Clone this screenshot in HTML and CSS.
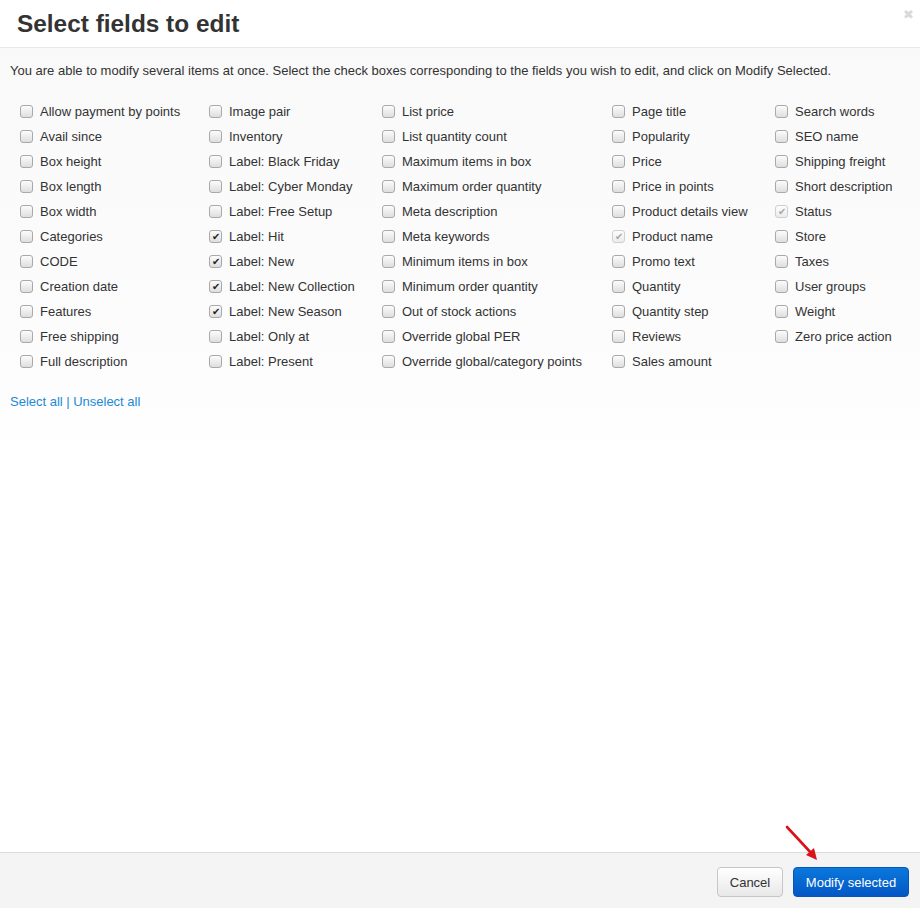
FILE: index.html
```html
<!DOCTYPE html>
<html>
<head>
<meta charset="utf-8">
<link rel="stylesheet" href="styles.css">
</head>
<body>
<div class="dialog">
  <div class="header">
    <h1 class="title">Select fields to edit</h1>
    <span class="close">&#x2716;</span>
  </div>
  <div class="content">
    <p class="intro">You are able to modify several items at once. Select the check boxes corresponding to the fields you wish to edit, and click on Modify Selected.</p>
    <div class="fields">
      <div class="col c1">
        <label class="field"><span class="cb"></span>Allow payment by points</label>
        <label class="field"><span class="cb"></span>Avail since</label>
        <label class="field"><span class="cb"></span>Box height</label>
        <label class="field"><span class="cb"></span>Box length</label>
        <label class="field"><span class="cb"></span>Box width</label>
        <label class="field"><span class="cb"></span>Categories</label>
        <label class="field"><span class="cb"></span>CODE</label>
        <label class="field"><span class="cb"></span>Creation date</label>
        <label class="field"><span class="cb"></span>Features</label>
        <label class="field"><span class="cb"></span>Free shipping</label>
        <label class="field"><span class="cb"></span>Full description</label>
      </div>
      <div class="col c2">
        <label class="field"><span class="cb"></span>Image pair</label>
        <label class="field"><span class="cb"></span>Inventory</label>
        <label class="field"><span class="cb"></span>Label: Black Friday</label>
        <label class="field"><span class="cb"></span>Label: Cyber Monday</label>
        <label class="field"><span class="cb"></span>Label: Free Setup</label>
        <label class="field"><span class="cb checked">&#x2714;</span>Label: Hit</label>
        <label class="field"><span class="cb checked">&#x2714;</span>Label: New</label>
        <label class="field"><span class="cb checked">&#x2714;</span>Label: New Collection</label>
        <label class="field"><span class="cb checked">&#x2714;</span>Label: New Season</label>
        <label class="field"><span class="cb"></span>Label: Only at</label>
        <label class="field"><span class="cb"></span>Label: Present</label>
      </div>
      <div class="col c3">
        <label class="field"><span class="cb"></span>List price</label>
        <label class="field"><span class="cb"></span>List quantity count</label>
        <label class="field"><span class="cb"></span>Maximum items in box</label>
        <label class="field"><span class="cb"></span>Maximum order quantity</label>
        <label class="field"><span class="cb"></span>Meta description</label>
        <label class="field"><span class="cb"></span>Meta keywords</label>
        <label class="field"><span class="cb"></span>Minimum items in box</label>
        <label class="field"><span class="cb"></span>Minimum order quantity</label>
        <label class="field"><span class="cb"></span>Out of stock actions</label>
        <label class="field"><span class="cb"></span>Override global PER</label>
        <label class="field"><span class="cb"></span>Override global/category points</label>
      </div>
      <div class="col c4">
        <label class="field"><span class="cb"></span>Page title</label>
        <label class="field"><span class="cb"></span>Popularity</label>
        <label class="field"><span class="cb"></span>Price</label>
        <label class="field"><span class="cb"></span>Price in points</label>
        <label class="field"><span class="cb"></span>Product details view</label>
        <label class="field"><span class="cb disabled">&#x2714;</span>Product name</label>
        <label class="field"><span class="cb"></span>Promo text</label>
        <label class="field"><span class="cb"></span>Quantity</label>
        <label class="field"><span class="cb"></span>Quantity step</label>
        <label class="field"><span class="cb"></span>Reviews</label>
        <label class="field"><span class="cb"></span>Sales amount</label>
      </div>
      <div class="col c5">
        <label class="field"><span class="cb"></span>Search words</label>
        <label class="field"><span class="cb"></span>SEO name</label>
        <label class="field"><span class="cb"></span>Shipping freight</label>
        <label class="field"><span class="cb"></span>Short description</label>
        <label class="field"><span class="cb disabled">&#x2714;</span>Status</label>
        <label class="field"><span class="cb"></span>Store</label>
        <label class="field"><span class="cb"></span>Taxes</label>
        <label class="field"><span class="cb"></span>User groups</label>
        <label class="field"><span class="cb"></span>Weight</label>
        <label class="field"><span class="cb"></span>Zero price action</label>
      </div>
    </div>
    <div class="links"><a class="link">Select all</a><span class="sep">|</span><a class="link">Unselect all</a></div>
  </div>
  <div class="footer">
    <button class="btn btn-cancel">Cancel</button>
    <button class="btn btn-primary">Modify selected</button>
    <svg class="arrow" width="40" height="40" viewBox="0 0 40 40">
      <line x1="3" y1="3" x2="29" y2="31" stroke="#d9131a" stroke-width="2.6" stroke-linecap="round"/>
      <path d="M33 36 L22 31 L30 24 Z" fill="#d9131a"/>
    </svg>
  </div>
</div>
</body>
</html>
```
FILE: styles.css
```css
html, body {
  margin: 0;
  padding: 0;
  background: #fff;
}
body {
  font-family: "Liberation Sans", Arial, sans-serif;
  color: #333;
  font-size: 13px;
}
.dialog {
  width: 920px;
  height: 908px;
  display: flex;
  flex-direction: column;
  position: relative;
}
.header {
  height: 48px;
  border-bottom: 1px solid #e8e8e8;
  box-sizing: border-box;
  display: flex;
  align-items: center;
  padding-left: 17px;
  background: #fff;
}
.title {
  margin: 0;
  font-size: 24.4px;
  font-weight: bold;
  color: #333;
}
.close {
  position: absolute;
  top: 7px;
  right: 6px;
  font-size: 13px;
  color: #d9d9d9;
}
.content {
  flex: 1;
  padding: 0 10px;
  background: linear-gradient(#f9f9f9 0px, #fcfcfc 300px, #fff 420px);
}
.intro {
  margin: 15px 0 0;
  line-height: 16px;
  color: #333;
}
.fields {
  display: grid;
  grid-template-columns: 189px 173px 230px 163px auto;
  margin-top: 20px;
  padding-left: 10px;
}
.col {
  display: flex;
  flex-direction: column;
}
.field {
  display: flex;
  align-items: center;
  height: 25px;
  white-space: nowrap;
}
.cb {
  width: 11px;
  height: 11px;
  border: 1px solid #a9a9a9;
  border-radius: 3px;
  background: linear-gradient(#fcfcfc, #dedede);
  margin-right: 7px;
  box-sizing: content-box;
  font-size: 10px;
  line-height: 11px;
  text-align: center;
  color: #222;
  flex: none;
}
.cb.disabled {
  border-color: #cfcfcf;
  background: linear-gradient(#fdfdfd, #ececec);
  color: #a8a8a8;
}
.links {
  margin-top: 20px;
  line-height: 16px;
}
.link {
  color: #1c8ad8;
  cursor: pointer;
}
.sep {
  color: #1c8ad8;
  margin: 0 3.5px;
}
.footer {
  height: 56px;
  box-sizing: border-box;
  border-top: 1px solid #dcdcdc;
  background: #f4f4f4;
  display: flex;
  justify-content: flex-end;
  align-items: flex-start;
  padding: 14px 11px 0 0;
  gap: 10px;
  position: relative;
}
.btn {
  height: 30px;
  border-radius: 4px;
  font-family: "Liberation Sans", Arial, sans-serif;
  font-size: 13px;
  padding: 0;
  white-space: nowrap;
  cursor: pointer;
}
.btn-cancel {
  width: 66px;
  border: 1px solid #c6c6c6;
  background: linear-gradient(#ffffff, #e8e8e8);
  color: #333;
}
.btn-primary {
  width: 116px;
  border: 1px solid #0855b7;
  background: linear-gradient(#0a78dc, #0357c4);
  color: #fff;
}
.arrow {
  position: absolute;
  left: 784px;
  top: -29px;
}
```
